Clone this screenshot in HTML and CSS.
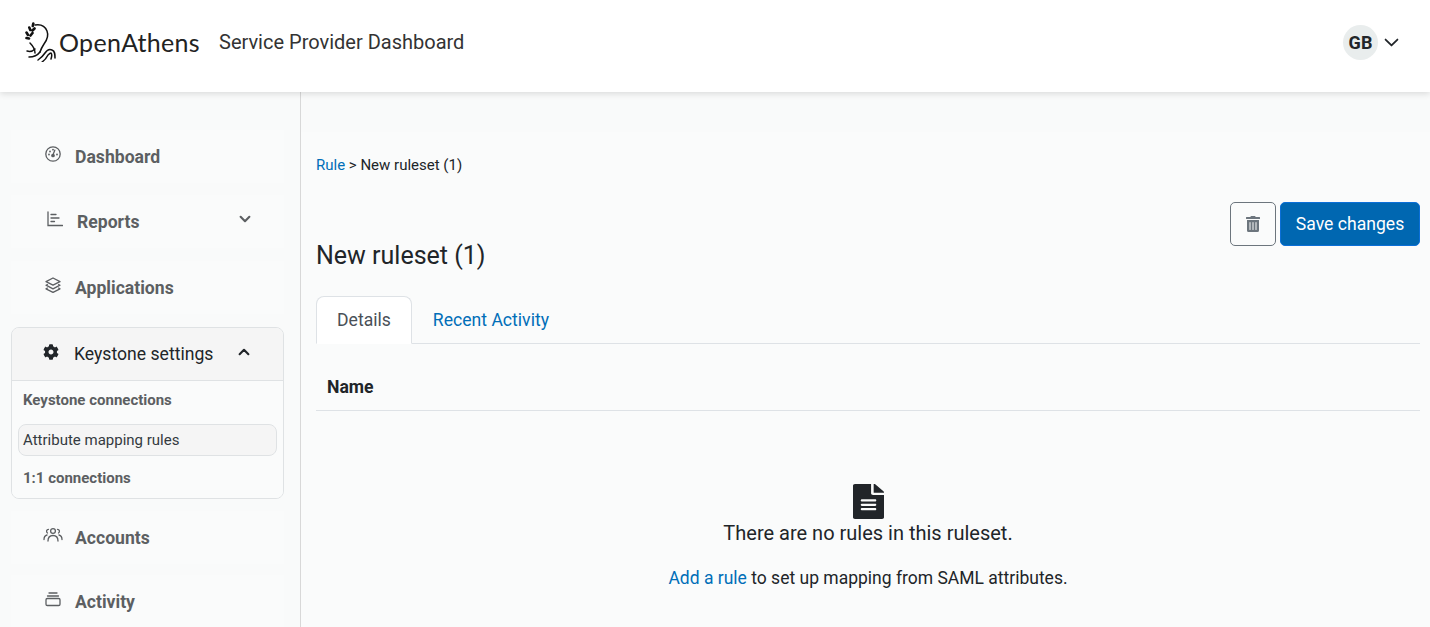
FILE: index.html
```html
<!DOCTYPE html>
<html lang="en">
<head>
    <meta charset="UTF-8">
    <meta name="viewport" content="width=device-width, initial-scale=1.0">
    <title>Service Provider Dashboard</title>
    <link rel="stylesheet" href="styles.css">
</head>
<body>
    <header class="topbar">
        <div class="brand">
            <svg class="brand-mark" viewBox="0 0 32 40" fill="none" stroke="#111" stroke-width="1.5" stroke-linecap="round" stroke-linejoin="round">
                <path d="M11 3c6-1 10 1 12 6 2 5 0 9-3 13-2 3-3 5-4 8"/>
                <path d="M11 31c0-4-2-7-5-10"/>
                <path d="M3 29c3 1 6 0 8-2"/>
                <path d="M5 35c4 0 8-1 11-5"/>
                <path d="M14 38c3-2 5-4 7-7 2-3 5-4 7-3 3 1 3 4 3 8"/>
                <path d="M18 40c3-2 5-5 6-7 1-1 2-2 3-2 1 1 1 3 0 6"/>
                <path d="M9.300 1.500l-.5 2.500M5.300 5.500l1 2.500M10.500 6.500l-2 2M2.500 10.500l1.500 2.500M8.500 11l-2 2.500M2.500 16l2.500 .5" stroke-width="2.600"/>
            </svg>
            <span class="brand-name">OpenAthens</span>
            <span class="brand-title">Service Provider Dashboard</span>
        </div>
        <div class="user-menu">
            <span class="avatar">GB</span>
            <svg class="user-caret" viewBox="0 0 16 16" fill="none" stroke="#212529" stroke-width="1.500" stroke-linecap="round" stroke-linejoin="round"><path d="M3 5.5l5 5 5-5"/></svg>
        </div>
    </header>

    <div class="layout">
        <nav class="sidebar">
            <a class="nav-item">
                <svg class="nav-icon" viewBox="0 0 16 16" fill="none" stroke="currentColor" stroke-width="1.3"><circle cx="8" cy="8" r="7.2"/><path d="M8 8.8l1.8-4.6" stroke-linecap="round"/><circle cx="8" cy="9.5" r="1.2" fill="currentColor"/><path d="M4 8.5v.1M5 5.5v.1M8 3.6v.1M12 8.5v.1" stroke-width="1.8" stroke-linecap="round"/></svg>
                <span>Dashboard</span>
            </a>
            <a class="nav-item nav-item-reports">
                <svg class="nav-icon" viewBox="0 0 16 16" fill="none" stroke="currentColor" stroke-width="1.3" stroke-linecap="round"><path d="M1 1v13.5h14.500"/><path d="M4 3.500h5M4 7h8M4 10.500h3.500"/></svg>
                <span>Reports</span>
                <svg class="nav-caret" viewBox="0 0 16 16" fill="none" stroke="currentColor" stroke-width="2.400" stroke-linecap="round" stroke-linejoin="round"><path d="M3 5.500l5 5 5-5"/></svg>
            </a>
            <a class="nav-item">
                <svg class="nav-icon" viewBox="0 0 16 16" fill="none" stroke="currentColor" stroke-width="1.300" stroke-linejoin="round"><path d="M8 1l7 3.600-7 3.600-7-3.600z"/><path d="M2.800 7.200L1 8.200l7 3.600 7-3.600-1.800-1"/><path d="M2.800 10.800l-1.800 1 7 3.600 7-3.600-1.800-1"/></svg>
                <span>Applications</span>
            </a>

            <div class="nav-group">
                <div class="nav-group-head">
                    <svg class="nav-icon" viewBox="0 0 512 512" fill="#212529"><path d="M487.4 315.7l-42.6-24.6c4.3-23.2 4.3-47 0-70.2l42.6-24.6c4.9-2.8 7.1-8.6 5.5-14-11.1-35.6-30-67.8-54.7-94.6-3.8-4.1-10-5.1-14.8-2.3L380.8 110c-17.9-15.4-38.5-27.3-60.8-35.1V25.8c0-5.6-3.9-10.5-9.4-11.7-36.7-8.2-74.3-7.8-109.2 0-5.5 1.2-9.4 6.1-9.4 11.7V75c-22.2 7.9-42.8 19.8-60.8 35.1L88.7 85.5c-4.9-2.8-11-1.9-14.8 2.3-24.7 26.7-43.6 58.9-54.7 94.6-1.7 5.4.6 11.2 5.5 14L67.3 221c-4.3 23.2-4.3 47 0 70.2l-42.6 24.6c-4.9 2.8-7.1 8.6-5.500 14 11.100 35.600 30 67.800 54.700 94.600 3.800 4.100 10 5.100 14.800 2.300l42.600-24.600c17.900 15.400 38.500 27.300 60.800 35.100v49.200c0 5.600 3.900 10.500 9.400 11.700 36.700 8.200 74.300 7.800 109.200 0 5.500-1.200 9.400-6.100 9.400-11.700v-49.200c22.200-7.900 42.800-19.800 60.800-35.100l42.600 24.600c4.900 2.800 11 1.900 14.800-2.300 24.700-26.700 43.600-58.900 54.700-94.600 1.500-5.500-.7-11.300-5.600-14.100zM256 336c-44.100 0-80-35.900-80-80s35.900-80 80-80 80 35.900 80 80-35.900 80-80 80z"/></svg>
                    <span>Keystone settings</span>
                    <svg class="nav-caret" viewBox="0 0 16 16" fill="none" stroke="#212529" stroke-width="2.400" stroke-linecap="round" stroke-linejoin="round"><path d="M3 10.500l5-5 5 5"/></svg>
                </div>
                <div class="nav-group-body">
                    <a class="sub-link">Keystone connections</a>
                    <a class="sub-link sub-link-active">Attribute mapping rules</a>
                    <a class="sub-link">1:1 connections</a>
                </div>
            </div>

            <a class="nav-item">
                <svg class="nav-icon nav-icon-wide" viewBox="0 0 20 16" fill="none" stroke="currentColor" stroke-width="1.300" stroke-linecap="round"><circle cx="10" cy="4" r="2.400"/><path d="M5 14c0-3.500 2-5.500 5-5.500s5 2 5 5.500"/><path d="M5.500 2.300A2 2 0 0 0 4.500 6M1 12.500c0-2.500 1-4 3-4.500"/><path d="M14.500 2.300a2 2 0 0 1 1 3.700M19 12.500c0-2.500-1-4-3-4.500"/></svg>
                <span>Accounts</span>
            </a>
            <a class="nav-item">
                <svg class="nav-icon" viewBox="0 0 16 16" fill="none" stroke="currentColor" stroke-width="1.300" stroke-linecap="round"><rect x="1" y="7.500" width="14" height="7" rx="1.300"/><path d="M2.500 5h11M4 2h8"/></svg>
                <span>Activity</span>
            </a>
        </nav>

        <main class="content">
            <p class="crumbs"><a class="link">Rule</a> &gt; New ruleset (1)</p>

            <div class="page-actions">
                <button class="btn-trash">
                    <svg viewBox="0 0 448 512" fill="#6c757d"><path d="M32 464a48 48 0 0 0 48 48h288a48 48 0 0 0 48-48V128H32zm272-256a16 16 0 0 1 32 0v224a16 16 0 0 1-32 0zm-96 0a16 16 0 0 1 32 0v224a16 16 0 0 1-32 0zm-96 0a16 16 0 0 1 32 0v224a16 16 0 0 1-32 0zM432 32H312l-9.400-18.700A24 24 0 0 0 281.100 0H166.800a23.720 23.720 0 0 0-21.400 13.300L136 32H16A16 16 0 0 0 0 48v32a16 16 0 0 0 16 16h416a16 16 0 0 0 16-16V48a16 16 0 0 0-16-16z"/></svg>
                </button>
                <button class="btn-save">Save changes</button>
            </div>

            <h1 class="page-title">New ruleset (1)</h1>

            <div class="tabs">
                <a class="tab tab-active">Details</a>
                <a class="tab">Recent Activity</a>
            </div>

            <div class="table-head">Name</div>

            <div class="empty">
                <svg class="empty-icon" viewBox="0 0 384 512" preserveAspectRatio="none" fill="#212529"><path d="M224 136V0H24C10.700 0 0 10.700 0 24v464c0 13.300 10.700 24 24 24h336c13.300 0 24-10.700 24-24V160H248c-13.200 0-24-10.800-24-24zm64 236c0 6.600-5.400 12-12 12H108c-6.600 0-12-5.400-12-12v-8c0-6.600 5.400-12 12-12h168c6.600 0 12 5.400 12 12v8zm0-64c0 6.600-5.400 12-12 12H108c-6.600 0-12-5.400-12-12v-8c0-6.600 5.400-12 12-12h168c6.600 0 12 5.400 12 12v8zm0-72v8c0 6.600-5.400 12-12 12H108c-6.600 0-12-5.400-12-12v-8c0-6.600 5.400-12 12-12h168c6.600 0 12 5.400 12 12zm96-114.100v6.100H256V0h6.100c6.400 0 12.500 2.500 17 7l97.900 98c4.500 4.500 7 10.600 7 16.900z"/></svg>
                <p class="empty-title">There are no rules in this ruleset.</p>
                <p class="empty-text"><a class="link">Add a rule</a> to set up mapping from SAML attributes.</p>
            </div>
        </main>
    </div>
</body>
</html>
```

FILE: styles.css
```css
* {
    box-sizing: border-box;
}

html,
body {
    height: 100%;
}

body {
    margin: 0;
    overflow: hidden;
    font-family: Roboto, "Liberation Sans", sans-serif;
    background-color: #f9fafa;
    color: #212529;
}

p,
h1 {
    margin: 0;
}

.topbar {
    position: relative;
    z-index: 2;
    height: 92px;
    display: flex;
    align-items: center;
    justify-content: space-between;
    padding: 0 29px 8px 24px;
    background: #fff;
    box-shadow: 0 2px 6px rgba(0, 0, 0, 0.12);
}

.brand {
    display: flex;
    align-items: center;
}

.brand-mark {
    width: 32px;
    height: 40px;
    margin-right: 3px;
}

.brand-name {
    width: 160px;
    font-family: Lato, sans-serif;
    font-weight: 400;
    font-size: 25px;
    letter-spacing: 0.3px;
    color: #222;
}

.brand-title {
    font-size: 20px;
    color: #333;
}

.user-menu {
    display: flex;
    align-items: center;
    gap: 4px;
}

.avatar {
    width: 35px;
    height: 35px;
    display: flex;
    align-items: center;
    justify-content: center;
    border-radius: 50%;
    background: #e9eded;
    font-weight: 700;
    font-size: 18px;
}

.user-caret {
    width: 19px;
    height: 19px;
}

.layout {
    display: flex;
    height: calc(100% - 92px);
}

.sidebar {
    width: 301px;
    flex-shrink: 0;
    padding: 38px 16px 0 11px;
    border-right: 1px solid #d8d8d8;
}

.nav-item {
    height: 53px;
    margin-bottom: 13px;
    display: flex;
    align-items: center;
    padding-left: 34px;
    background: #fafbfb;
    color: #5c5f62;
    font-weight: 700;
    font-size: 17.6px;
}

.nav-item:first-child {
    margin-bottom: 12px;
}

.nav-group + .nav-item {
    margin-bottom: 11px;
}

.nav-icon {
    width: 16px;
    height: 16px;
    margin-right: 14px;
    margin-bottom: 5px;
    flex-shrink: 0;
}

.nav-icon-wide {
    width: 20px;
    margin-left: -2px;
    margin-right: 12px;
}

.nav-item-reports .nav-icon {
    margin-left: 2px;
}

.nav-caret {
    width: 14px;
    height: 14px;
    margin-left: auto;
    margin-right: 32px;
    margin-bottom: 5px;
}

.nav-group {
    margin-bottom: 12px;
    border: 1px solid #dfe2e4;
    border-radius: 8px;
    overflow: hidden;
}

.nav-group-head {
    height: 53px;
    display: flex;
    align-items: center;
    padding-left: 31px;
    background: #f5f5f5;
    border-bottom: 1px solid #dfe2e4;
    font-size: 17.6px;
}

.nav-group-head .nav-icon {
    margin-right: 15px;
}

.nav-group-body {
    padding: 3px 6px 4px;
    display: flex;
    flex-direction: column;
    gap: 6px;
    background: #fafbfb;
}

.sub-link {
    height: 32px;
    display: flex;
    align-items: center;
    padding-left: 5px;
    color: #5c5f62;
    font-weight: 700;
    font-size: 15px;
}

.sub-link:first-child {
    margin-bottom: 2px;
}

.sub-link-active {
    border: 1px solid #dfe2e4;
    border-radius: 8px;
    padding-left: 4px;
    background: #f5f5f5;
    color: #343a40;
    font-weight: 400;
}

.content {
    flex: 1;
    padding: 64px 10px 0 15px;
    min-width: 0;
    background: linear-gradient(#f9fafa 40px, #fafbfb 40px);
}

.link {
    color: #006eb8;
}

.crumbs {
    height: 18px;
    font-size: 15px;
    line-height: 18px;
}

.page-actions {
    margin-top: 28px;
    display: flex;
    justify-content: flex-end;
    gap: 4px;
}

.btn-trash {
    width: 46px;
    height: 44px;
    padding: 0;
    display: flex;
    align-items: center;
    justify-content: center;
    background: transparent;
    border: 1px solid #6c757d;
    border-radius: 5px;
}

.btn-trash svg {
    width: 14px;
    height: 16px;
}

.btn-save {
    width: 140px;
    height: 44px;
    padding: 0;
    background: #0067b1;
    border: 1px solid #0b6fd8;
    border-radius: 5px;
    color: #fff;
    font-family: inherit;
    font-size: 17.6px;
}

.page-title {
    margin-top: -4px;
    height: 54px;
    font-weight: 400;
    font-size: 25px;
    line-height: 28px;
}

.tabs {
    display: flex;
    height: 48px;
    border-bottom: 1px solid #dee2e6;
    font-size: 17.6px;
}

.tab {
    height: 48px;
    padding: 0 20px;
    display: flex;
    align-items: center;
    color: #006eb8;
    border: 1px solid transparent;
    border-radius: 8px 8px 0 0;
}

.tab-active {
    background: #fff;
    border-color: #dee2e6 #dee2e6 #fff;
    color: #495057;
}

.table-head {
    height: 67px;
    display: flex;
    align-items: flex-end;
    padding: 0 0 13px 11px;
    border-bottom: 1px solid #dee2e6;
    font-weight: 700;
    font-size: 17.6px;
}

.empty {
    padding-top: 73px;
    display: flex;
    flex-direction: column;
    align-items: center;
    text-align: center;
}

.empty-icon {
    width: 31px;
    height: 35px;
}

.empty-title {
    margin-top: 2px;
    font-size: 20px;
    line-height: 24px;
}

.empty-text {
    margin-top: 21px;
    font-size: 17.5px;
    line-height: 24px;
}
```
